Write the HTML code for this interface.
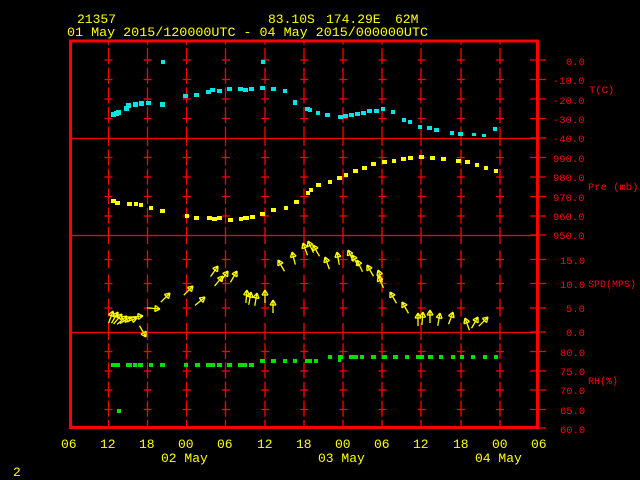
<!DOCTYPE html>
<html><head><meta charset="utf-8"><style>
html,body{margin:0;padding:0;background:#000;width:640px;height:480px;overflow:hidden}
svg{display:block}
text{font-family:"Liberation Mono","DejaVu Sans Mono",monospace}
.y{fill:#ffff00;font-size:13px}
.r{fill:#ff0000;font-size:10.5px}
</style></head><body>
<svg width="640" height="480" viewBox="0 0 640 480" xmlns="http://www.w3.org/2000/svg">
<defs>
<g id="a" stroke="#ffff00" stroke-width="1.3" fill="none"><path d="M0 0 L0 13 M0 0 L-3 5 M0 0 L3 5 M-3 5 L3 5"/></g>
</defs>
<text class="y" x="77" y="23">21357</text>
<text class="y" x="268" y="23">83.10S</text>
<text class="y" x="326" y="23">174.29E</text>
<text class="y" x="395" y="23">62M</text>
<text class="y" x="67" y="36" textLength="361" lengthAdjust="spacingAndGlyphs">01 May 2015/120000UTC - 04 May 2015/000000UTC</text>

<g stroke="#ff0000" fill="none">
<g stroke-width="1.3">
<path d="M108.5 40V138M147.5 40V138M186.5 40V138M225.5 40V138M265 40V138M304 40V138M343 40V138M382 40V138M421 40V138M461 40V138M500 40V138" stroke-dasharray="16 3.6" stroke-dashoffset="-8.2"/>
<path d="M108.5 138V235M147.5 138V235M186.5 138V235M225.5 138V235M265 138V235M304 138V235M343 138V235M382 138V235M421 138V235M461 138V235M500 138V235" stroke-dasharray="16 3.4" stroke-dashoffset="8"/>
<path d="M108.5 235V332M147.5 235V332M186.5 235V332M225.5 235V332M265 235V332M304 235V332M343 235V332M382 235V332M421 235V332M461 235V332M500 235V332" stroke-dasharray="18 6.25" stroke-dashoffset="9"/>
<path d="M108.5 332V428M147.5 332V428M186.5 332V428M225.5 332V428M265 332V428M304 332V428M343 332V428M382 332V428M421 332V428M461 332V428M500 332V428" stroke-dasharray="16 3.2" stroke-dashoffset="8"/>
</g>
<g stroke-width="1.3" stroke-dasharray="8 31.15">
<path d="M104.5 60H505M104.5 79.5H505M104.5 99H505M104.5 118.5H505M104.5 157.5H505M104.5 177H505M104.5 196.5H505M104.5 216H505M104.5 259.5H505M104.5 283.5H505M104.5 308H505M104.5 351.5H505M104.5 371H505M104.5 390H505M104.5 409.5H505"/>
</g>
<path stroke-width="1.3" d="M530 60H546M530 79.5H546M530 99H546M530 118.5H546M530 138H546M530 157.5H546M530 177H546M530 196.5H546M530 216H546M530 235H546M530 259.5H546M530 283.5H546M530 308H546M530 332H546M530 351.5H546M530 371H546M530 390H546M530 409.5H546M530 428H546"/>
<path stroke-width="1.3" d="M71 138.5H539M71 235.5H539M71 332.5H539"/>
<rect x="70.5" y="41" width="467" height="386.5" stroke-width="3"/>
</g>

<g class="r">
<text x="566" y="65">0.0</text><text x="553" y="84">-10.0</text><text x="553" y="104">-20.0</text><text x="553" y="123">-30.0</text><text x="553" y="142">-40.0</text>
<text x="589" y="93">T(C)</text>
<text x="553" y="162">990.0</text><text x="553" y="181">980.0</text><text x="553" y="201">970.0</text><text x="553" y="220">960.0</text><text x="553" y="239">950.0</text>
<text x="588" y="190">Pre (mb)</text>
<text x="560" y="264">15.0</text><text x="560" y="288">10.0</text><text x="566" y="312">5.0</text><text x="566" y="336">0.0</text>
<text x="560" y="356">80.0</text><text x="560" y="375">75.0</text><text x="560" y="394">70.0</text><text x="560" y="414">65.0</text><text x="560" y="433">60.0</text>
<text x="588" y="384" font-size="10">RH(%)</text>
<text x="588" y="287" font-size="10">SPD(MPS)</text>
</g>

<g class="y">
<text x="61" y="448">06</text><text x="100" y="448">12</text><text x="139" y="448">18</text><text x="178" y="448">00</text><text x="217" y="448">06</text><text x="257" y="448">12</text><text x="296" y="448">18</text><text x="335" y="448">00</text><text x="374" y="448">06</text><text x="413" y="448">12</text><text x="453" y="448">18</text><text x="492" y="448">00</text><text x="531" y="448">06</text>
<text x="161" y="462">02 May</text><text x="318" y="462">03 May</text><text x="475" y="462">04 May</text>
<text x="13" y="476">2</text>
</g>

<g fill="#00e5e5">
<rect x="111" y="112" width="5" height="5"/><rect x="114" y="111" width="5" height="5"/><rect x="116" y="110" width="5" height="5"/><rect x="124" y="106" width="5" height="5"/><rect x="126" y="103" width="5" height="5"/><rect x="133" y="102" width="5" height="5"/><rect x="139" y="101" width="5" height="5"/><rect x="146" y="101" width="5" height="4"/><rect x="160" y="102" width="5" height="5"/><rect x="161" y="60" width="4" height="4"/>
<rect x="183" y="94" width="5" height="4"/><rect x="194" y="93" width="5" height="4"/><rect x="206" y="90" width="5" height="4"/><rect x="210" y="88" width="5" height="4"/><rect x="217" y="89" width="5" height="4"/><rect x="227" y="87" width="5" height="4"/><rect x="238" y="87" width="5" height="4"/><rect x="243" y="88" width="5" height="4"/><rect x="249" y="87" width="5" height="4"/><rect x="260" y="86" width="5" height="4"/><rect x="261" y="60" width="4" height="4"/>
<rect x="271" y="87" width="5" height="4"/><rect x="283" y="89" width="4" height="4"/><rect x="293" y="100" width="4" height="5"/><rect x="305" y="107" width="5" height="4"/><rect x="308" y="108" width="4" height="4"/><rect x="316" y="111" width="4" height="4"/><rect x="325" y="113" width="5" height="4"/><rect x="338" y="115" width="5" height="4"/><rect x="343" y="114" width="5" height="4"/><rect x="349" y="113" width="5" height="4"/><rect x="355" y="112" width="5" height="4"/><rect x="361" y="111" width="5" height="4"/><rect x="367" y="109" width="5" height="4"/><rect x="374" y="109" width="5" height="4"/><rect x="381" y="107" width="4" height="4"/><rect x="391" y="110" width="4" height="4"/>
<rect x="402" y="118" width="4" height="4"/><rect x="408" y="120" width="4" height="4"/><rect x="418" y="125" width="4" height="4"/><rect x="427" y="126" width="5" height="4"/><rect x="434" y="128" width="5" height="4"/><rect x="450" y="131" width="4" height="4"/><rect x="458" y="132" width="5" height="4"/><rect x="472" y="133" width="4" height="3"/><rect x="482" y="134" width="4" height="3"/><rect x="493" y="127" width="4" height="4"/>
</g>

<g fill="#ffff00">
<rect x="111" y="199" width="5" height="4"/><rect x="115" y="201" width="5" height="4"/><rect x="127" y="202" width="5" height="4"/><rect x="134" y="202" width="4" height="4"/><rect x="139" y="203" width="4" height="4"/><rect x="149" y="206" width="4" height="4"/><rect x="160" y="209" width="5" height="4"/><rect x="185" y="214" width="4" height="4"/><rect x="194" y="216" width="5" height="4"/><rect x="207" y="216" width="5" height="4"/><rect x="212" y="217" width="5" height="4"/><rect x="217" y="216" width="5" height="4"/><rect x="228" y="218" width="5" height="4"/><rect x="239" y="217" width="4" height="4"/><rect x="243" y="216" width="6" height="4"/><rect x="250" y="215" width="5" height="4"/><rect x="260" y="212" width="5" height="4"/><rect x="271" y="208" width="5" height="4"/><rect x="284" y="206" width="4" height="4"/><rect x="294" y="200" width="5" height="4"/><rect x="306" y="191" width="4" height="4"/><rect x="309" y="188" width="4" height="4"/><rect x="316" y="183" width="5" height="4"/><rect x="328" y="180" width="4" height="4"/><rect x="337" y="176" width="5" height="4"/><rect x="344" y="173" width="4" height="4"/><rect x="353" y="169" width="5" height="4"/><rect x="362" y="166" width="5" height="4"/><rect x="371" y="162" width="5" height="4"/><rect x="382" y="160" width="5" height="4"/><rect x="392" y="159" width="4" height="4"/><rect x="401" y="157" width="5" height="4"/><rect x="408" y="156" width="5" height="4"/><rect x="419" y="155" width="5" height="4"/><rect x="430" y="156" width="5" height="4"/><rect x="441" y="157" width="5" height="4"/><rect x="456" y="159" width="5" height="4"/><rect x="465" y="160" width="5" height="4"/><rect x="475" y="163" width="4" height="4"/><rect x="484" y="166" width="4" height="4"/><rect x="494" y="169" width="4" height="4"/>
</g>

<g fill="#00e000">
<rect x="111" y="363" width="9" height="4"/><rect x="126" y="363" width="6" height="4"/><rect x="133" y="363" width="4" height="4"/><rect x="138" y="363" width="5" height="4"/><rect x="149" y="363" width="4" height="4"/><rect x="160" y="363" width="5" height="4"/><rect x="117" y="409" width="4" height="4"/>
<rect x="184" y="363" width="4" height="4"/><rect x="195" y="363" width="5" height="4"/><rect x="206" y="363" width="9" height="4"/><rect x="217" y="363" width="5" height="4"/><rect x="227" y="363" width="5" height="4"/><rect x="238" y="363" width="9" height="4"/><rect x="249" y="363" width="5" height="4"/>
<rect x="260" y="359" width="5" height="4"/><rect x="271" y="359" width="5" height="4"/><rect x="283" y="359" width="4" height="4"/><rect x="293" y="359" width="4" height="4"/><rect x="305" y="359" width="7" height="4"/><rect x="314" y="359" width="4" height="4"/><rect x="328" y="355" width="4" height="4"/><rect x="338" y="355" width="3" height="7"/>
<rect x="340" y="355" width="3" height="4"/><rect x="349" y="355" width="9" height="4"/><rect x="360" y="355" width="4" height="4"/><rect x="371" y="355" width="5" height="4"/><rect x="382" y="355" width="5" height="4"/><rect x="393" y="355" width="5" height="4"/><rect x="405" y="355" width="4" height="4"/><rect x="416" y="355" width="8" height="4"/><rect x="428" y="355" width="5" height="4"/><rect x="439" y="355" width="4" height="4"/><rect x="451" y="355" width="4" height="4"/><rect x="460" y="355" width="4" height="4"/><rect x="471" y="355" width="4" height="4"/><rect x="483" y="355" width="4" height="4"/><rect x="494" y="355" width="4" height="4"/>
</g>

<g>
<use href="#a" transform="translate(113,311) rotate(20)"/><use href="#a" transform="translate(118,312) rotate(30)"/><use href="#a" transform="translate(122,314) rotate(40)"/><use href="#a" transform="translate(127,316) rotate(50)"/><use href="#a" transform="translate(131,317) rotate(60)"/><use href="#a" transform="translate(137,318) rotate(70)"/><use href="#a" transform="translate(143,316) rotate(85)"/><use href="#a" transform="translate(146,337) rotate(150)"/>
<use href="#a" transform="translate(160,309) rotate(95)"/><use href="#a" transform="translate(170,293) rotate(45)"/><use href="#a" transform="translate(193,286) rotate(45)"/><use href="#a" transform="translate(205,297) rotate(50)"/><use href="#a" transform="translate(218,266) rotate(35)"/><use href="#a" transform="translate(223,276) rotate(40)"/><use href="#a" transform="translate(228,271) rotate(35)"/><use href="#a" transform="translate(237,271) rotate(30)"/>
<use href="#a" transform="translate(247,290) rotate(5)"/><use href="#a" transform="translate(251,292) rotate(10)"/><use href="#a" transform="translate(257,293) rotate(10)"/><use href="#a" transform="translate(265,290) rotate(0)"/><use href="#a" transform="translate(273,300) rotate(0)"/>
<use href="#a" transform="translate(278,260) rotate(-30)"/><use href="#a" transform="translate(292,252) rotate(-15)"/><use href="#a" transform="translate(303,243) rotate(-20)"/><use href="#a" transform="translate(308,241) rotate(-25)"/><use href="#a" transform="translate(313,245) rotate(-30)"/><use href="#a" transform="translate(325,257) rotate(-20)"/><use href="#a" transform="translate(337,252) rotate(-10)"/><use href="#a" transform="translate(348,250) rotate(-25)"/><use href="#a" transform="translate(352,255) rotate(-30)"/><use href="#a" transform="translate(357,260) rotate(-25)"/><use href="#a" transform="translate(367,265) rotate(-30)"/><use href="#a" transform="translate(378,270) rotate(-20)"/><use href="#a" transform="translate(378,276) rotate(-25)"/>
<use href="#a" transform="translate(390,292) rotate(-30)"/><use href="#a" transform="translate(402,302) rotate(-30)"/><use href="#a" transform="translate(418,313) rotate(0)"/><use href="#a" transform="translate(423,312) rotate(5)"/><use href="#a" transform="translate(430,310) rotate(0)"/><use href="#a" transform="translate(440,313) rotate(10)"/><use href="#a" transform="translate(453,312) rotate(20)"/><use href="#a" transform="translate(465,318) rotate(-20)"/><use href="#a" transform="translate(478,317) rotate(30)"/><use href="#a" transform="translate(488,317) rotate(45)"/>
</g>
</svg>
</body></html>
